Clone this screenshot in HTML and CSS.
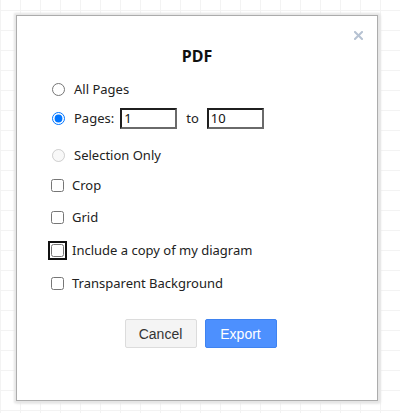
FILE: index.html
```html
<!DOCTYPE html>
<html>
<head>
<meta charset="utf-8">
<link rel="stylesheet" href="styles.css">
</head>
<body>
<div class="dialog">
  <button class="close" aria-label="Close">
    <svg width="9" height="9" viewBox="0 0 9 9"><path d="M1 1L8 8M8 1L1 8" stroke="#b6c2d2" stroke-width="2" stroke-linecap="square"/></svg>
  </button>
  <h1 class="title">PDF</h1>
  <div class="options">
    <label class="row r-all"><input type="radio" name="pages"><span>All Pages</span></label>
    <label class="row r-pages"><input type="radio" name="pages" checked><span>Pages:</span>
      <input class="num first" type="text" value="1"><span class="to">to</span><input class="num" type="text" value="10"></label>
    <label class="row r-sel disabled"><input type="radio" name="pages" disabled><span>Selection Only</span></label>
    <label class="row r-crop"><input type="checkbox"><span>Crop</span></label>
    <label class="row r-grid"><input type="checkbox"><span>Grid</span></label>
    <label class="row r-inc"><input type="checkbox" class="focused"><span>Include a copy of my diagram</span></label>
    <label class="row r-tr"><input type="checkbox"><span>Transparent Background</span></label>
  </div>
  <div class="buttons">
    <button class="btn cancel">Cancel</button>
    <button class="btn export">Export</button>
  </div>
</div>
</body>
</html>
```
FILE: styles.css
```css
html, body {
  margin: 0;
  padding: 0;
  width: 400px;
  height: 413px;
  overflow: hidden;
}
body {
  background-color: #fff;
  background-image:
    linear-gradient(to right, #f3f3f3 1px, transparent 1px),
    linear-gradient(to bottom, #f3f3f3 1px, transparent 1px);
  background-size: 20px 20px;
  background-position: 0 10px;
  font-family: "Noto Sans", "Open Sans", sans-serif;
  color: #222;
  padding-top: 15px;
  padding-left: 16px;
  box-sizing: border-box;
}
.dialog {
  position: relative;
  width: 362px;
  height: 386px;
  box-sizing: border-box;
  background: #fff;
  border: 1px solid #acacac;
  box-shadow: 0 0 2px 2px #e6e6e6, 1px 1px 3px 1px #dcdcdc;
}
.close {
  position: absolute;
  top: 15px;
  right: 14px;
  width: 9px;
  height: 9px;
  padding: 0;
  border: 0;
  background: none;
  line-height: 0;
}
.title {
  margin: 0;
  padding-top: 30px;
  text-align: center;
  font-size: 16px;
  font-weight: bold;
  line-height: 20px;
  color: #111;
}
.options {
  display: flex;
  flex-direction: column;
  padding-left: 34px;
  margin-top: 12px;
}
.row {
  display: flex;
  align-items: center;
  font-size: 13px;
  height: 22px;
  color: #222;
}
.row input[type=radio] {
  width: 13px;
  height: 13px;
  margin: 0 9px 0 1px;
}
.row input[type=checkbox] {
  width: 13px;
  height: 13px;
  margin: 0 8px 0 0;
}
.r-pages { margin-top: 7px; }
.r-sel { margin-top: 15px; }
.r-crop { margin-top: 8px; }
.r-grid { margin-top: 10px; }
.r-inc { margin-top: 11px; }
.r-tr { margin-top: 11px; }
.num {
  width: 57px;
  height: 21px;
  box-sizing: border-box;
  border: 2px solid;
  border-color: #1f1f1f #6a6a6a #6a6a6a #1f1f1f;
  padding: 0 2px;
  font-family: "Noto Sans", "Open Sans", sans-serif;
  font-size: 13px;
  color: #111;
  margin: 0;
}
.num.first { margin-left: 6px; }
.to { margin: 0 8px 0 9px; }
input.focused {
  outline: 2px solid #111;
  outline-offset: 1px;
  border-radius: 3px;
}
.buttons {
  display: flex;
  justify-content: center;
  gap: 8px;
  margin-top: 25px;
  padding-left: 7px;
}
.btn {
  width: 72px;
  height: 29px;
  box-sizing: border-box;
  border-radius: 2px;
  font-family: "Liberation Sans", Arial, sans-serif;
  font-size: 14px;
  padding: 0;
}
.cancel {
  background: #f4f4f4;
  border: 1px solid #dcdcdc;
  color: #333;
}
.export {
  background: #4d90fe;
  border: 1px solid #3f83f0;
  color: #fff;
}
```
